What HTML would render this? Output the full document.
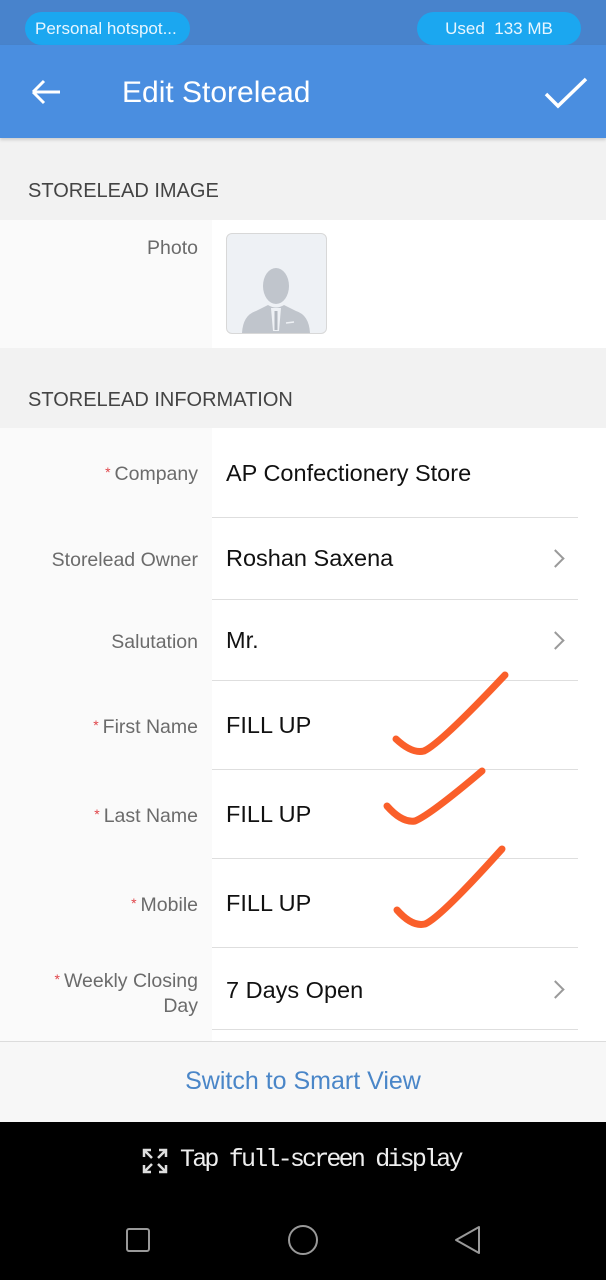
<!DOCTYPE html>
<html><head><meta charset="utf-8"><style>
*{margin:0;padding:0;box-sizing:border-box}
body{width:606px;height:1280px;position:relative;overflow:hidden;font-family:"Liberation Sans",sans-serif;background:#f2f2f2}
.a{position:absolute}
.lbl{position:absolute;right:408px;color:#6b6b6b;font-size:19.5px;text-align:right;white-space:nowrap}
.req{color:#e0454a;font-size:14px;margin-right:4px;vertical-align:3px}
.val{position:absolute;left:226px;color:#111;font-size:23.5px;white-space:nowrap}
.div{position:absolute;left:212px;width:366px;height:1px;background:#dedede}
.chev{position:absolute;left:549px;width:13px;height:13px;border-right:2.5px solid #9a9a9a;border-top:2.5px solid #9a9a9a;transform:rotate(45deg)}
</style></head><body>
<div class="a" style="left:0;top:0;width:606px;height:45px;background:#4883cc"></div>
<div class="a" style="left:25px;top:12px;width:165px;height:33px;border-radius:17px;background:#1ba7f0;color:#e8f6ff;font-size:17px;line-height:33px;padding-left:10px">Personal hotspot...</div>
<div class="a" style="left:417px;top:12px;width:164px;height:33px;border-radius:17px;background:#1ba7f0;color:#e8f6ff;font-size:17px;line-height:33px;text-align:center">Used&nbsp; 133 MB</div>
<div class="a" style="left:0;top:45px;width:606px;height:93px;background:#4a8ee0;box-shadow:0 2px 3px rgba(0,0,0,.15)"></div>
<svg class="a" style="left:30px;top:77px" width="34" height="30"><path d="M3 15H30M3 15L14 4M3 15L14 26" stroke="#fff" stroke-width="3" fill="none"/></svg>
<div class="a" style="left:122px;top:76px;color:#fff;font-size:30px">Edit Storelead</div>
<svg class="a" style="left:543px;top:76px" width="46" height="34"><path d="M3 18L15 30L43 3" stroke="#fff" stroke-width="3.5" fill="none"/></svg>

<div class="a" style="left:28px;top:180px;color:#444;font-size:20px">STORELEAD IMAGE</div>
<div class="a" style="left:0;top:220px;width:606px;height:128px;background:#fff"></div>
<div class="a" style="left:0;top:220px;width:212px;height:128px;background:#fafafa"></div>
<div class="lbl" style="top:237px">Photo</div>
<div class="a" style="left:226px;top:233px;width:101px;height:101px;border:1.5px solid #d8d8d8;border-radius:6px;background:#eef1f5;overflow:hidden">
<svg width="100" height="100" style="position:absolute;left:-1px;top:-1px"><ellipse cx="50" cy="53" rx="13" ry="18" fill="#c0c5cc"/><path d="M16 100Q17 82 30 78L42 72Q50 77 58 72L70 78Q83 82 84 100Z" fill="#c0c5cc"/><path d="M45 75L55 75L53 98L47 98Z" fill="#eef1f5"/><path d="M48.5 78L51.5 78L51.5 97L48.5 97Z" fill="#b2b8c0"/><path d="M60 90L68 89" stroke="#eef1f5" stroke-width="1.5"/></svg></div>

<div class="a" style="left:28px;top:389px;color:#444;font-size:20px">STORELEAD INFORMATION</div>
<div class="a" style="left:0;top:428px;width:606px;height:613px;background:#fff"></div>
<div class="a" style="left:0;top:428px;width:212px;height:613px;background:#fafafa"></div>

<div class="lbl" style="top:463px"><span class="req">*</span>Company</div>
<div class="val" style="top:460px">AP Confectionery Store</div>
<div class="div" style="top:517px"></div>
<div class="lbl" style="top:549px">Storelead Owner</div>
<div class="val" style="top:545px">Roshan Saxena</div><div class="chev" style="top:552px"></div>
<div class="div" style="top:599px"></div>
<div class="lbl" style="top:631px">Salutation</div>
<div class="val" style="top:627px">Mr.</div><div class="chev" style="top:634px"></div>
<div class="div" style="top:680px"></div>
<div class="lbl" style="top:716px"><span class="req">*</span>First Name</div>
<div class="val" style="top:712px">FILL UP</div>
<div class="div" style="top:769px"></div>
<div class="lbl" style="top:805px"><span class="req">*</span>Last Name</div>
<div class="val" style="top:801px">FILL UP</div>
<div class="div" style="top:858px"></div>
<div class="lbl" style="top:894px"><span class="req">*</span>Mobile</div>
<div class="val" style="top:890px">FILL UP</div>
<div class="div" style="top:947px"></div>
<div class="lbl" style="top:967px;line-height:25px"><span class="req">*</span>Weekly Closing<br>Day</div>
<div class="val" style="top:977px">7 Days Open</div><div class="chev" style="top:983px"></div>
<div class="div" style="top:1029px"></div>

<svg class="a" style="left:0;top:0" width="606" height="1280"><g stroke="#fa5f2a" stroke-width="7" fill="none" stroke-linecap="round">
<path d="M396 739Q412 754 424 751Q440 744 505 675"/>
<path d="M387 806Q402 823 415 821Q430 815 482 771"/>
<path d="M397 910Q412 927 425 924Q440 918 502 849"/></g></svg>

<div class="a" style="left:0;top:1041px;width:606px;height:81px;background:#f7f7f7;border-top:1px solid #dcdcdc"></div>
<div class="a" style="left:0;top:1067px;width:606px;text-align:center;color:#4a86c8;font-size:25px">Switch to Smart View</div>
<div class="a" style="left:0;top:1122px;width:606px;height:158px;background:#000"></div>
<svg class="a" style="left:142px;top:1148px" width="26" height="26"><g stroke="#ddd" stroke-width="2.5" fill="none"><path d="M2 9V2H9M2 2L10 10M24 9V2H17M24 2L16 10M2 17V24H9M2 24L10 16M24 17V24H17M24 24L16 16"/></g></svg>
<div class="a" style="left:180px;top:1145px;color:#eee;font-size:25px;font-family:'Liberation Mono',monospace;letter-spacing:-2.8px">Tap full-screen display</div>
<div class="a" style="left:126px;top:1228px;width:24px;height:24px;border:2px solid #999;border-radius:3px"></div>
<div class="a" style="left:288px;top:1225px;width:30px;height:30px;border:2px solid #999;border-radius:50%"></div>
<svg class="a" style="left:452px;top:1224px" width="30" height="32"><path d="M27 3L4 16L27 29Z" stroke="#999" stroke-width="2" fill="none" stroke-linejoin="round"/></svg>
</body></html>
